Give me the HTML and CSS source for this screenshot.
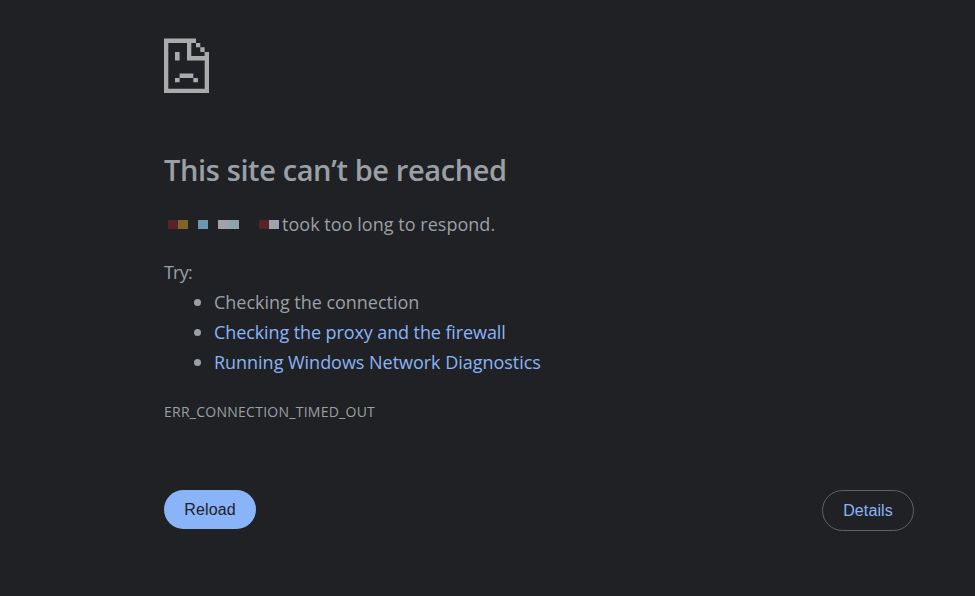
FILE: index.html
```html
<!DOCTYPE html>
<html lang="en">
<head>
<meta charset="utf-8">
<title>This site can’t be reached</title>
<link rel="stylesheet" href="styles.css">
</head>
<body>
<main class="page">
  <svg class="sad-file" viewBox="0 0 45 55" aria-hidden="true">
    <path fill-rule="evenodd" d="M0 .6H32V5H36.3V9.3H40.6V14H45V55H0zM4.3 5V50.7H40.7V22.5H23V5zM27.3 5V18H40.6V14H36.3V9.3H32V5zM11 14h4.6v8.6H11zM15.6 35.6h13.7V40H15.6zM11 40h4.6v4.3H11zM29.3 40h4.6v4.3h-4.6z"/>
  </svg>
  <h1><span class="title-text">This site can’t be reached</span></h1>
  <p class="summary"><svg class="host" viewBox="0 0 118 9" aria-hidden="true" shape-rendering="crispEdges"><path fill="#592325" d="M4 0h10v9H4zM95 0h10v9H95z"/><path fill="#83622a" d="M14 0h10v9H14z"/><path fill="#6b98ae" d="M34 0h10v9H34z"/><path fill="#9fa2ab" d="M54 0h11v9H54zM105 0h10v9h-10z"/><path fill="#8fa3ab" d="M65 0h10v9H65z"/></svg><span class="summary-text">took too long to respond.</span></p>
  <p class="try"><span class="try-text">Try:</span></p>
  <ul class="suggestions">
    <li><span class="check-connection">Checking the connection</span></li>
    <li><a class="check-proxy">Checking the proxy and the firewall</a></li>
    <li><a class="diagnostics">Running Windows Network Diagnostics</a></li>
  </ul>
  <p class="code"><span class="code-text">ERR_CONNECTION_TIMED_OUT</span></p>
  <div class="actions">
    <button class="reload">Reload</button>
    <button class="details">Details</button>
  </div>
</main>
</body>
</html>
```
FILE: styles.css
```css
* { box-sizing: border-box; }
body {
  margin: 0;
  background: #202124;
  color: #9aa0a6;
  font: 18px/30px "Open Sans", "Noto Sans", sans-serif;
}
.page { width: 750px; margin-left: 164px; padding-top: 38px; }
.sad-file { display: block; width: 45px; height: 55px; fill: #ababab; }
h1 { margin: 58px 0 0; font-size: 29px; line-height: 38px; font-weight: 600; letter-spacing: -0.38px; }
p { margin: 0; }
.summary { display: flex; align-items: center; margin-top: 20px; }
.summary-text { letter-spacing: 0.03px; }
.host { width: 118px; height: 9px; }
.try { margin-top: 18px; letter-spacing: -0.8px; }
.suggestions { margin: 0; padding: 0; list-style: none; }
.suggestions li { display: flex; align-items: center; padding-left: 30px; }
.suggestions li::before {
  content: "";
  width: 7px;
  height: 7px;
  margin-right: 13px;
  border-radius: 50%;
  background: #9aa0a6;
}
a { color: #8ab4f8; }
.check-connection { letter-spacing: -0.03px; }
.check-proxy { letter-spacing: -0.1px; }
.diagnostics { letter-spacing: -0.03px; }
.code { margin-top: 25px; font-size: 14px; line-height: 20px; letter-spacing: 0.26px; }
.actions { display: flex; justify-content: space-between; align-items: flex-start; margin-top: 68px; }
button {
  width: 92px;
  padding: 0;
  border: 0;
  border-radius: 21px;
  font: 16px/20px "Liberation Sans", Arial, sans-serif;
  letter-spacing: 0.1px;
}
.reload { height: 39px; background: #8ab4f8; color: #202124; }
.details { height: 41px; border: 1px solid #5f6368; background: none; color: #8ab4f8; }
```
